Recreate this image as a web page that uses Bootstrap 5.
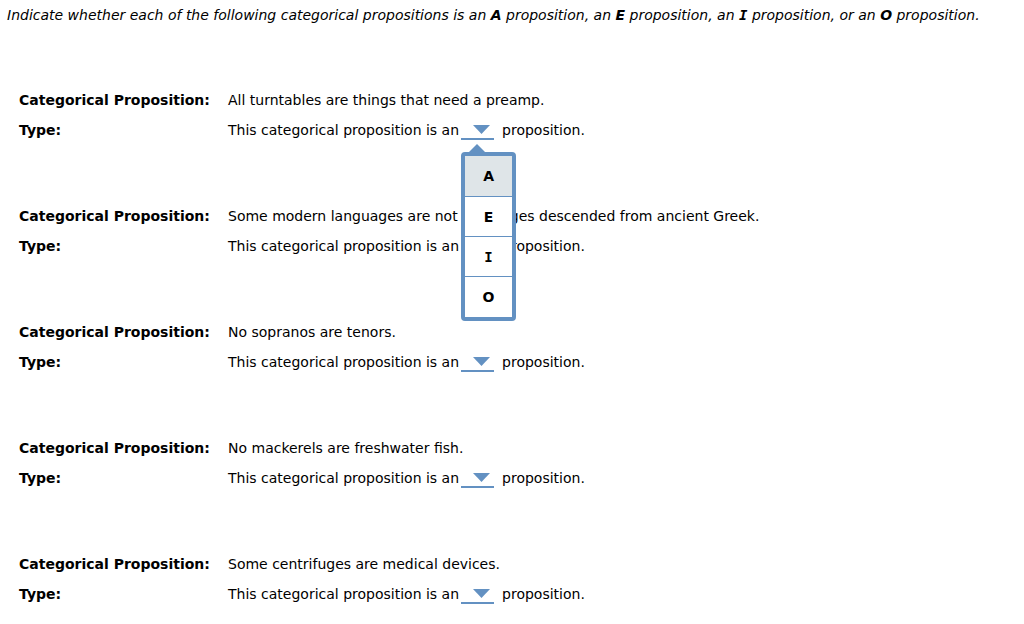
<!DOCTYPE html>
<html lang="en">
<head>
<meta charset="utf-8">
<meta name="viewport" content="width=device-width, initial-scale=1">
<title>Categorical propositions</title>
<link href="https://cdn.jsdelivr.net/npm/bootstrap@5.3.0/dist/css/bootstrap.min.css" rel="stylesheet">
<style>
  :root { --accent: #6391c2; }
  body { font-family: Verdana, "DejaVu Sans", sans-serif; font-size: 14px; line-height: 30px; color: #000; background: #fff; }
  .intro { padding: 0 7px; margin-bottom: 55px; }
  .questions { padding: 0 19px; gap: 56px; }
  .field-label { flex: 0 0 209px; font-weight: bold; }
  .slab { font-family: Verdana, "DejaVu Sans Mono", monospace; line-height: 1; }
  .answer { margin: 0 8px 0 2px; }
  .pick {
    appearance: none; width: 33px; height: 21px; padding: 0; border: 0; border-radius: 0;
    border-bottom: 2px solid var(--accent); outline: 0; color: #000; font-weight: bold;
    background: url("data:image/svg+xml,%3Csvg xmlns='http://www.w3.org/2000/svg' viewBox='0 0 17 9'%3E%3Cpath d='M0 0h17L8.5 9z' fill='%236391c2'/%3E%3C/svg%3E") no-repeat 12px 6px / 17px 9px;
  }
  .choices {
    top: 37px; left: 0; width: 55px; min-width: 0; padding: 0; margin: 0;
    border: 4px solid var(--accent); border-radius: 4px; background: #fff;
  }
  .choices::before {
    content: ""; position: absolute; top: -12px; left: 4px;
    border: 8px solid transparent; border-top: 0; border-bottom-color: var(--accent);
  }
  .choice {
    height: 40px; padding: 0; line-height: 38px; text-align: center; font-size: 14px;
    font-weight: bold; color: #000;
  }
  .choice + .choice { border-top: 1px solid var(--accent); }
  .choice:last-child { height: 41px; }
  .choices .current, .choice:hover { background: #dfe5e8; color: #000; }
</style>
</head>
<body>
<main>
  <p class="intro fst-italic">Indicate whether each of the following categorical propositions is an <b>A</b> proposition, an <b>E</b> proposition, an <b class="slab">I</b> proposition, or an <b>O</b> proposition.</p>
  <form class="questions d-flex flex-column">
    <section>
      <div class="d-flex"><div class="field-label">Categorical Proposition:</div><div>All turntables are things that need a preamp.</div></div>
      <div class="d-flex"><label class="field-label" for="q1">Type:</label>
        <div class="d-flex"><span>This categorical proposition is an</span>
          <div class="answer position-relative d-flex">
            <select class="pick mt-1" id="q1"><option></option><option>A</option><option>E</option><option>I</option><option>O</option></select>
            <div class="choices dropdown-menu show">
              <button type="button" class="choice dropdown-item current">A</button>
              <button type="button" class="choice dropdown-item">E</button>
              <button type="button" class="choice dropdown-item"><span class="slab">I</span></button>
              <button type="button" class="choice dropdown-item">O</button>
            </div>
          </div><span>proposition.</span></div></div>
    </section>
    <section>
      <div class="d-flex"><div class="field-label">Categorical Proposition:</div><div>Some modern languages are not languages descended from ancient Greek.</div></div>
      <div class="d-flex"><label class="field-label" for="q2">Type:</label>
        <div class="d-flex"><span>This categorical proposition is an</span>
          <div class="answer d-flex"><select class="pick mt-1" id="q2"><option></option><option>A</option><option>E</option><option>I</option><option>O</option></select></div><span>proposition.</span></div></div>
    </section>
    <section>
      <div class="d-flex"><div class="field-label">Categorical Proposition:</div><div>No sopranos are tenors.</div></div>
      <div class="d-flex"><label class="field-label" for="q3">Type:</label>
        <div class="d-flex"><span>This categorical proposition is an</span>
          <div class="answer d-flex"><select class="pick mt-1" id="q3"><option></option><option>A</option><option>E</option><option>I</option><option>O</option></select></div><span>proposition.</span></div></div>
    </section>
    <section>
      <div class="d-flex"><div class="field-label">Categorical Proposition:</div><div>No mackerels are freshwater fish.</div></div>
      <div class="d-flex"><label class="field-label" for="q4">Type:</label>
        <div class="d-flex"><span>This categorical proposition is an</span>
          <div class="answer d-flex"><select class="pick mt-1" id="q4"><option></option><option>A</option><option>E</option><option>I</option><option>O</option></select></div><span>proposition.</span></div></div>
    </section>
    <section>
      <div class="d-flex"><div class="field-label">Categorical Proposition:</div><div>Some centrifuges are medical devices.</div></div>
      <div class="d-flex"><label class="field-label" for="q5">Type:</label>
        <div class="d-flex"><span>This categorical proposition is an</span>
          <div class="answer d-flex"><select class="pick mt-1" id="q5"><option></option><option>A</option><option>E</option><option>I</option><option>O</option></select></div><span>proposition.</span></div></div>
    </section>
  </form>
</main>
<script src="https://cdn.jsdelivr.net/npm/bootstrap@5.3.0/dist/js/bootstrap.bundle.min.js"></script>
</body>
</html>
